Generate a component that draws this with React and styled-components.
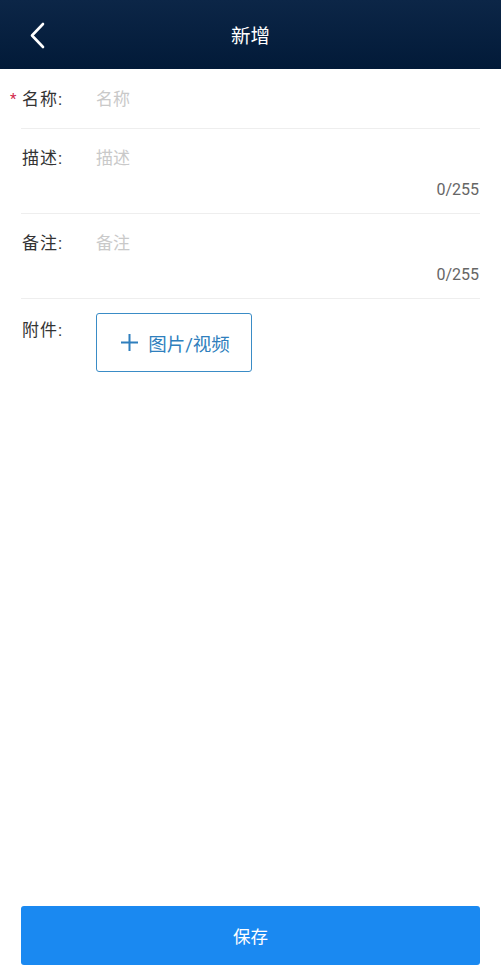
import React from 'react'
import styled, { createGlobalStyle } from 'styled-components'

const Global = createGlobalStyle`
  html, body {
    margin: 0;
    padding: 0;
    background: #fff;
  }
  body {
    font-family: Roboto, "Noto Sans CJK SC", sans-serif;
    color: #333;
  }
  * { box-sizing: border-box; }
`;

const Page = styled.div`
  height: 976px;
  display: flex;
  flex-direction: column;
`;

const Header = styled.header`
  height: 69px;
  flex: none;
  display: grid;
  grid-template-columns: 69px 1fr 69px;
  align-items: center;
  padding-top: 5px;
  background: linear-gradient(180deg, #0c2647 0%, #021a38 100%);
  color: #fff;
`;

const Back = styled.button`
  border: 0;
  background: none;
  padding: 0 0 4px 29px;
  height: 100%;
  display: flex;
  align-items: center;
  cursor: pointer;
`;

const Title = styled.h1`
  margin: 0;
  text-align: center;
  font-size: 19.5px;
  font-weight: 400;
  line-height: 22px;
`;

const Form = styled.main`
  flex: 1;
  padding: 0 21px;
`;

const Row = styled.div`
  display: grid;
  grid-template-columns: 75px 1fr;
  padding: ${p => p.$pad};
  border-bottom: ${p => (p.$last ? '0' : '1px solid #eeeeee')};
`;

const Label = styled.label`
  font-size: 17px;
  line-height: 20px;
  letter-spacing: 1px;
  color: #333;
  white-space: nowrap;
  margin-top: ${p => p.$offset || 0}px;
  padding-left: 1px;
`;

const Star = styled.span`
  display: inline-block;
  width: 7px;
  margin-left: -12px;
  margin-right: 5px;
  color: #d2284c;
  font-size: 15px;
  letter-spacing: 0;
  vertical-align: top;
`;

const Input = styled.input`
  border: 0;
  outline: none;
  padding: 0;
  font: inherit;
  font-size: 17px;
  line-height: 20px;
  height: 20px;
  color: #333;
  background: none;
  &::placeholder { color: #c9c9c9; }
`;

const Area = styled.textarea`
  display: block;
  width: 100%;
  border: 0;
  outline: none;
  resize: none;
  padding: 0;
  font: inherit;
  font-size: 17px;
  line-height: 20px;
  height: 32px;
  color: #333;
  background: none;
  &::placeholder { color: #c9c9c9; }
`;

const Counter = styled.div`
  text-align: right;
  font-size: 16px;
  line-height: 20px;
  color: #666;
  margin-right: 1px;
`;

const UploadBtn = styled.button`
  width: 156px;
  height: 59px;
  border: 1.5px solid #3a8cc6;
  border-radius: 3px;
  background: #fff;
  color: #2f7fbd;
  display: flex;
  align-items: center;
  justify-content: center;
  gap: 9px;
  font-family: Roboto, "Noto Sans CJK SC", sans-serif;
  font-size: 18.5px;
  padding: 0 0 0 2px;
  cursor: pointer;
`;

const Footer = styled.footer`
  flex: none;
  padding: 0 21px 11px;
`;

const SaveBtn = styled.button`
  width: 100%;
  height: 59px;
  border: 0;
  border-radius: 3px;
  background: #1a89f1;
  color: #fff;
  font-family: Roboto, "Noto Sans CJK SC", sans-serif;
  font-size: 17.5px;
  cursor: pointer;
`;

export default function App() {
  return (
    <Page>
      <Global />
      <Header>
        <Back aria-label="back">
          <svg width="18" height="27" viewBox="0 0 18 27">
            <polyline points="14,2 3,13.5 14,25" fill="none" stroke="#fff" strokeWidth="2.6" strokeLinecap="round" strokeLinejoin="round" />
          </svg>
        </Back>
        <Title>新增</Title>
        <span />
      </Header>
      <Form>
        <Row $pad="20px 0 19px">
          <Label><Star>*</Star>名称:</Label>
          <Input placeholder="名称" />
        </Row>
        <Row $pad="19px 0 13px">
          <Label>描述:</Label>
          <div>
            <Area placeholder="描述" />
            <Counter>0/255</Counter>
          </div>
        </Row>
        <Row $pad="19px 0 13px">
          <Label>备注:</Label>
          <div>
            <Area placeholder="备注" />
            <Counter>0/255</Counter>
          </div>
        </Row>
        <Row $pad="14px 0 0" $last>
          <Label $offset={7}>附件:</Label>
          <div>
            <UploadBtn>
              <svg width="19" height="19" viewBox="0 0 19 19">
                <path d="M9.5 1v17M1 9.5h17" stroke="#2f7fbd" strokeWidth="2" />
              </svg>
              图片/视频
            </UploadBtn>
          </div>
        </Row>
      </Form>
      <Footer>
        <SaveBtn>保存</SaveBtn>
      </Footer>
    </Page>
  )
}
